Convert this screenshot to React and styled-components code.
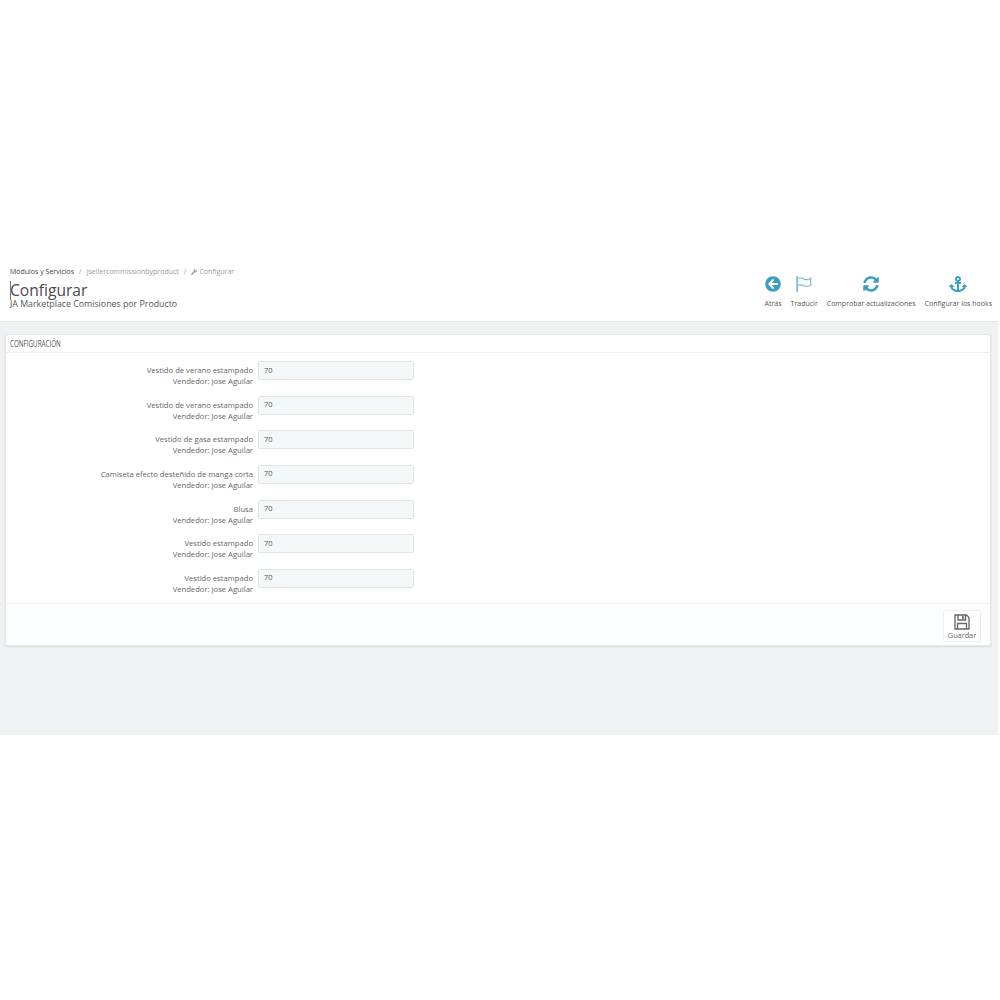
import React from "react";
import styled, { createGlobalStyle } from "styled-components";
import { FaArrowCircleLeft, FaSyncAlt, FaAnchor, FaWrench } from "react-icons/fa";

const GlobalStyle = createGlobalStyle`
  html, body {
    margin: 0;
    padding: 0;
    background: #fff;
    font-family: "Open Sans", "Liberation Sans", sans-serif;
  }
`;

const Page = styled.div`
  width: 1000px;
  height: 1000px;
  padding-top: 264px;
  box-sizing: border-box;
`;

const Admin = styled.div`
  width: 998px;
  height: 471px;
  background: #eff1f2;
`;

const Header = styled.header`
  height: 58px;
  box-sizing: border-box;
  background: #fff;
  border-bottom: 1px solid #e2e4e5;
  display: flex;
  justify-content: space-between;
  padding: 3px 6px 0 10px;
`;

const Titles = styled.div`
  display: flex;
  flex-direction: column;
`;

const Breadcrumb = styled.div`
  display: flex;
  align-items: center;
  height: 10px;
  font-size: 7px;
  line-height: 10px;
  color: #9a9a9a;
`;

const Crumb = styled.span`
  color: ${(p) => (p.$dark ? "#444" : "#9a9a9a")};
  display: inline-flex;
  align-items: center;
  gap: 2px;
`;

const Slash = styled.span`
  margin: 0 5px;
`;

const Title = styled.h1`
  margin: 4px 0 0;
  font-size: 15.6px;
  line-height: 19px;
  font-weight: 400;
  color: #4a4a4a;
  height: 19px;
  position: relative;

  &::before {
    content: "";
    position: absolute;
    left: 0;
    top: 0;
    width: 1px;
    height: 19px;
    background: #777;
  }
`;

const Subtitle = styled.div`
  font-size: 8.8px;
  line-height: 11px;
  color: #555;
  margin-top: -1px;
`;

const Toolbar = styled.nav`
  display: flex;
  align-items: flex-start;
  gap: 9px;
  padding-top: 9px;
`;

const ToolButton = styled.div`
  display: flex;
  flex-direction: column;
  align-items: center;
  font-size: 7px;
  line-height: 10px;
  color: #555;
  white-space: nowrap;

  svg {
    height: ${(p) => p.$icon || 16}px;
    width: ${(p) => p.$icon || 16}px;
    margin-top: ${(p) => (p.$icon ? (16 - p.$icon) / 2 : 0)}px;
    margin-bottom: ${(p) => (p.$icon ? 7 + (16 - p.$icon) / 2 : 7)}px;
    color: ${(p) => p.$color || "#3a9fc0"};
    display: block;
  }
`;

const Panel = styled.section`
  margin: 12px 0 0 5px;
  width: 986px;
  height: 312px;
  box-sizing: border-box;
  background: #fff;
  border: 1px solid #e6e6e6;
  border-radius: 3px;
  box-shadow: 0 1px 2px rgba(0, 0, 0, 0.1);
  display: flex;
  flex-direction: column;
`;

const PanelHeading = styled.h2`
  margin: 0;
  height: 18px;
  box-sizing: border-box;
  padding: 2px 0 0 4px;
  font-size: 9.5px;
  line-height: 13px;
  font-weight: 400;
  color: #555;
  border-bottom: 1px solid #eee;
`;

const HeadingText = styled.span`
  display: inline-block;
  transform: scaleX(0.66);
  transform-origin: left center;
  white-space: nowrap;
`;

const Form = styled.div`
  flex: 1;
  display: flex;
  flex-direction: column;
  gap: 12.66px;
  padding-top: 8px;
`;

const Row = styled.div`
  display: flex;
  gap: 5px;
  height: 22px;
`;

const Label = styled.label`
  width: 247px;
  text-align: right;
  font-size: 7.65px;
  line-height: 11px;
  color: #666;
  padding-top: 4px;
`;

const Input = styled.input`
  width: 156px;
  height: 19px;
  box-sizing: border-box;
  background: #f5f8f9;
  border: 1px solid #dfe5e6;
  border-radius: 2px;
  padding: 0 5px 2px;
  font-family: inherit;
  font-size: 7.5px;
  color: #555;
`;

const Footer = styled.div`
  height: 42px;
  box-sizing: border-box;
  background: #fcfdfe;
  border-top: 1px solid #eee;
  display: flex;
  justify-content: flex-end;
  padding: 6px 9px 0 0;
`;

const SaveButton = styled.button`
  width: 38px;
  height: 32px;
  box-sizing: border-box;
  background: #fff;
  border: 1px solid #eee;
  border-radius: 2px;
  padding: 3px 0 0;
  display: flex;
  flex-direction: column;
  align-items: center;
  font-family: inherit;
  font-size: 7.3px;
  line-height: 10px;
  color: #666;

  svg {
    width: 16px;
    height: 16px;
    color: #666;
  }
`;

const FlagIcon = () => (
  <svg viewBox="0 0 16 16" fill="none" stroke="currentColor">
    <path d="M1.200 0v16" strokeWidth="1.800" />
    <path d="M2.500 2.500c2.500-1 4-.3 5.500.6 2 1 4 .9 7-.9-.7 2.300-.7 4 .2 6.500-2.700 1.800-5.200 2-7.200 1-1.800-.9-3.500-1.200-5.500-.3" strokeWidth="1.200" />
  </svg>
);

const SaveIcon = () => (
  <svg viewBox="0 0 16 16" fill="none" stroke="currentColor" strokeWidth="1.300">
    <path d="M1 1h11.500L15 3.500V15H1z" />
    <path d="M4 1v5h7.500V1" />
    <path d="M9 2v3" strokeWidth="1.600" />
    <path d="M3.500 15V9.500h9V15" />
  </svg>
);

const items = [
  "Vestido de verano estampado",
  "Vestido de verano estampado",
  "Vestido de gasa estampado",
  "Camiseta efecto desteñido de manga corta",
  "Blusa",
  "Vestido estampado",
  "Vestido estampado",
];

export default function App() {
  return (
    <Page>
      <GlobalStyle />
      <Admin>
        <Header>
          <Titles>
            <Breadcrumb>
              <Crumb $dark>Módulos y Servicios</Crumb>
              <Slash>/</Slash>
              <Crumb>jsellercommissionbyproduct</Crumb>
              <Slash>/</Slash>
              <Crumb>
                <FaWrench size={6} /> Configurar
              </Crumb>
            </Breadcrumb>
            <Title>Configurar</Title>
            <Subtitle>JA Marketplace Comisiones por Producto</Subtitle>
          </Titles>
          <Toolbar>
            <ToolButton>
              <FaArrowCircleLeft />
              Atrás
            </ToolButton>
            <ToolButton $color="#7fbdd2">
              <FlagIcon />
              Traducir
            </ToolButton>
            <ToolButton>
              <FaSyncAlt />
              Comprobar actualizaciones
            </ToolButton>
            <ToolButton $icon={18}>
              <FaAnchor />
              Configurar los hooks
            </ToolButton>
          </Toolbar>
        </Header>
        <Panel>
          <PanelHeading>
            <HeadingText>CONFIGURACIÓN</HeadingText>
          </PanelHeading>
          <Form>
            {items.map((name, i) => (
              <Row key={i}>
                <Label>
                  {name}
                  <br />
                  Vendedor: Jose Aguilar
                </Label>
                <Input defaultValue="70" />
              </Row>
            ))}
          </Form>
          <Footer>
            <SaveButton>
              <SaveIcon />
              Guardar
            </SaveButton>
          </Footer>
        </Panel>
      </Admin>
    </Page>
  );
}
